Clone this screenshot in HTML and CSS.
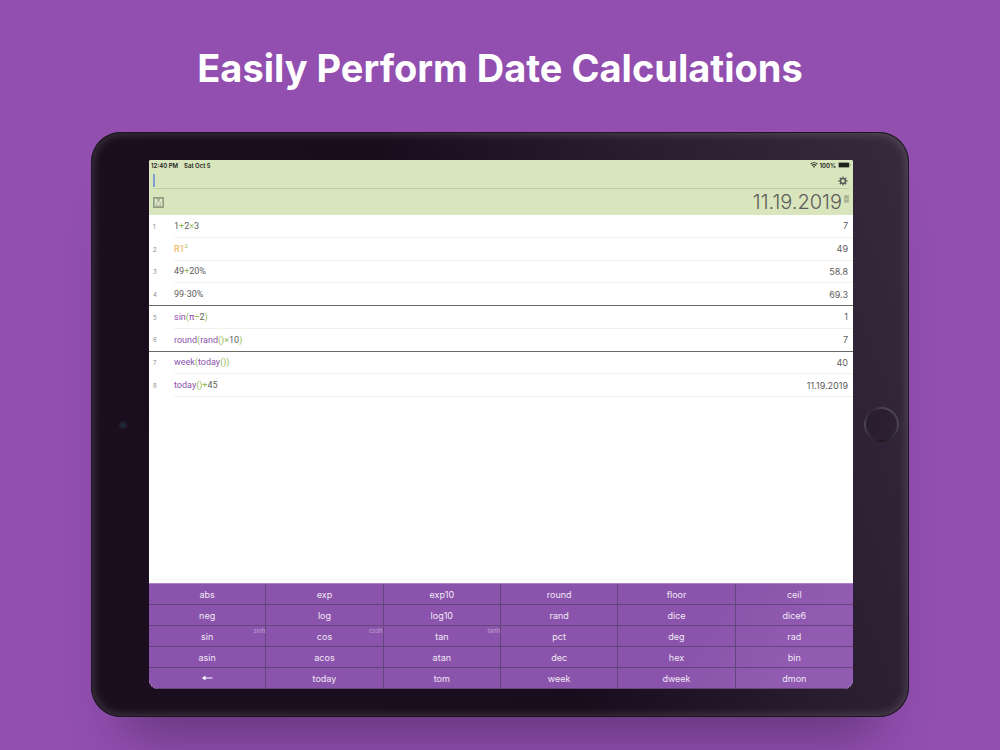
FILE: index.html
```html
<!DOCTYPE html>
<html lang="en">
<head>
<meta charset="utf-8">
<meta name="viewport" content="width=device-width, initial-scale=1">
<title>Easily Perform Date Calculations</title>
<link rel="stylesheet" href="styles.css">
</head>
<body>
<h1 class="headline">Easily Perform Date Calculations</h1>
<main class="tablet">
  <div class="side side-left"><span class="camera"></span></div>
  <section class="screen">
    <header class="display">
      <div class="status">
        <span>12:40 PM</span><span>Sat Oct 5</span>
        <svg class="wifi" viewBox="0 0 14 10" aria-hidden="true"><path d="M1 3.6a8.6 8.6 0 0 1 12 0M3.3 6a5.3 5.3 0 0 1 7.4 0" fill="none" stroke="currentColor" stroke-width="1.9"/><path d="M7 9.8 4.9 7.6a3 3 0 0 1 4.2 0z" fill="currentColor"/></svg>
        <span>100%</span>
        <svg class="battery" viewBox="0 0 26 12" aria-hidden="true"><rect x=".5" y=".5" width="22.500" height="11" rx="3" fill="none" stroke="currentColor" opacity=".45"/><rect x="1.500" y="1.500" width="20.500" height="9" rx="1.500" fill="currentColor"/><path d="M24.300 4v4q1.200-.6 1.200-2t-1.200-2" fill="currentColor" opacity=".5"/></svg>
      </div>
      <div class="entry">
        <input class="entry-field" type="text" aria-label="Expression">
        <button class="settings" type="button" aria-label="Settings">
          <svg viewBox="0 0 20 20" aria-hidden="true"><g stroke="currentColor" stroke-width="2.600"><path d="M10 1v4M10 15v4M1 10h4M15 10h4M3.600 3.600l3 3M13.400 13.400l3 3M16.400 3.600l-3 3M6.600 13.400l-3 3"/></g><circle cx="10" cy="10" r="4.900" fill="none" stroke="currentColor" stroke-width="2.900"/></svg>
        </button>
      </div>
      <div class="result">
        <span class="memory">M</span>
        <output class="total">11.19.2019</output>
        <span class="modes"><span>DEG</span><span>DEC</span></span>
      </div>
    </header>
    <ol class="tape">
      <li class="line"><span class="num">1</span><span class="calc"><span class="expr">1<i class="op">+</i>2<i class="op">×</i>3</span><span>7</span></span></li>
      <li class="line"><span class="num">2</span><span class="calc"><span class="expr"><i class="ref">R1</i><sup class="op">2</sup></span><span>49</span></span></li>
      <li class="line"><span class="num">3</span><span class="calc"><span class="expr">49<i class="op">+</i>20%</span><span>58.8</span></span></li>
      <li class="line divided"><span class="num">4</span><span class="calc"><span class="expr">99<i class="op">-</i>30%</span><span>69.3</span></span></li>
      <li class="line"><span class="num">5</span><span class="calc"><span class="expr"><i class="fn">sin</i><i class="op">(</i><i class="fn">π</i><i class="op">÷</i>2<i class="op">)</i></span><span>1</span></span></li>
      <li class="line divided"><span class="num">6</span><span class="calc"><span class="expr"><i class="fn">round</i><i class="op">(</i><i class="fn">rand</i><i class="op">()×</i>10<i class="op">)</i></span><span>7</span></span></li>
      <li class="line"><span class="num">7</span><span class="calc"><span class="expr"><i class="fn">week</i><i class="op">(</i><i class="fn">today</i><i class="op">())</i></span><span>40</span></span></li>
      <li class="line"><span class="num">8</span><span class="calc"><span class="expr"><i class="fn">today</i><i class="op">()+</i>45</span><span>11.19.2019</span></span></li>
    </ol>
    <div class="keypad">
      <button type="button" class="key">abs</button><button type="button" class="key">exp</button><button type="button" class="key">exp10</button><button type="button" class="key">round</button><button type="button" class="key">floor</button><button type="button" class="key">ceil</button>
      <button type="button" class="key">neg</button><button type="button" class="key">log</button><button type="button" class="key">log10</button><button type="button" class="key">rand</button><button type="button" class="key">dice</button><button type="button" class="key">dice6</button>
      <button type="button" class="key">sin<span class="alt">sinh</span></button><button type="button" class="key">cos<span class="alt">cosh</span></button><button type="button" class="key">tan<span class="alt">tanh</span></button><button type="button" class="key">pct</button><button type="button" class="key">deg</button><button type="button" class="key">rad</button>
      <button type="button" class="key">asin</button><button type="button" class="key">acos</button><button type="button" class="key">atan</button><button type="button" class="key">dec</button><button type="button" class="key">hex</button><button type="button" class="key">bin</button>
      <button type="button" class="key" aria-label="Back"><svg class="back" viewBox="0 0 22 12" aria-hidden="true"><path d="M5 6h16" stroke="currentColor" stroke-width="2.400"/><path d="M0 6 7 1v10z" fill="currentColor"/></svg></button><button type="button" class="key">today</button><button type="button" class="key">tom</button><button type="button" class="key">week</button><button type="button" class="key">dweek</button><button type="button" class="key">dmon</button>
    </div>
  </section>
  <div class="side"><button class="home" type="button" aria-label="Home"></button></div>
</main>
</body>
</html>
```
FILE: styles.css
```css
* { box-sizing: border-box; }
body {
  margin: 0;
  min-height: 100vh;
  display: flex;
  flex-direction: column;
  padding: 44px 91px 33px;
  background: #924fb0;
  font-family: Inter, "Liberation Sans", sans-serif;
  overflow: hidden;
}
button {
  margin: 0;
  padding: 0;
  border: 0;
  background: none;
  font: inherit;
  color: inherit;
}
.headline {
  margin: 0 0 40px;
  font-size: 38px;
  line-height: 48px;
  font-weight: 700;
  text-align: center;
  color: #fff;
}
.tablet {
  flex: 1;
  display: grid;
  grid-template-columns: 58px 1fr 56px;
  padding: 28px 0;
  border-radius: 30px;
  background: linear-gradient(70deg, #1b0f1f 0%, #190c1d 48%, #2b1e31 75%, #372a3d 100%);
  box-shadow:
    inset 0 0 0 1px #1b171d,
    inset 0 0 12px rgba(255, 255, 255, .24),
    0 50px 50px -34px rgba(40, 20, 50, .45);
}
.side {
  display: flex;
  align-items: center;
  justify-content: center;
}
.side-left { padding-left: 6px; }
.camera {
  width: 8px;
  height: 8px;
  border-radius: 50%;
  background: radial-gradient(#1d2940 25%, #231b2c 45%, #251a2a 100%);
}
.home {
  width: 35px;
  height: 35px;
  border-radius: 50%;
  background:
    linear-gradient(100deg, #291c2e, #2f2135) padding-box,
    conic-gradient(#4a434f, #4c4651 25%, #1d171f 50%, #4c4651 75%, #2c2530 90%, #4a434f) border-box;
  border: 2px solid transparent;
}
.screen {
  display: flex;
  flex-direction: column;
  min-width: 0;
  overflow: hidden;
  border-radius: 2px 2px 9px 9px;
  background: #fff;
  color: #5c5c5c;
  font-size: 9px;
}
.display {
  padding: 0 4px;
  background: #d9e5bc;
}
.status {
  display: flex;
  align-items: center;
  height: 10px;
  gap: 6px;
  margin: 0 -2px;
  font-size: 6px;
  font-weight: 600;
  color: #20231c;
}
.wifi {
  width: 8px;
  height: 6px;
  margin: 0 -4px 0 auto;
}
.battery {
  width: 13px;
  height: 6px;
  margin-left: -4px;
}
.entry {
  display: flex;
  align-items: center;
  height: 19px;
  padding-top: 3px;
  border-bottom: 1px solid #c3cda9;
}
.entry-field {
  flex: 1;
  min-width: 0;
  height: 13px;
  padding: 0;
  border: 0;
  border-left: 2px solid #7f9fd2;
  outline: 0;
  background: none;
  font: inherit;
  color: inherit;
  caret-color: #6d8fd0;
}
.settings {
  width: 12px;
  height: 10px;
  display: flex;
  justify-content: center;
}
.settings svg {
  width: 10px;
  height: 10px;
}
.result {
  display: flex;
  align-items: center;
  height: 26px;
}
.memory {
  width: 11px;
  height: 11px;
  margin-top: 1px;
  border: 1px solid #929c81;
  background: #a1ab8e;
  color: #e6eed3;
  font-weight: 600;
  line-height: 9px;
  text-align: center;
}
.total {
  margin-left: auto;
  font-size: 20px;
  line-height: 24px;
  font-weight: 300;
}
.modes {
  display: flex;
  flex-direction: column;
  width: 5px;
  height: 8px;
  margin: 0 0 7px 2px;
  overflow: hidden;
  background: #bac4a2;
  color: #8b947b;
  font-size: 2px;
  line-height: 4px;
  text-align: center;
}
.tape {
  display: grid;
  grid-template-rows: repeat(8, 1fr);
  height: 182px;
  margin: 0;
  padding: 0;
  list-style: none;
}
.line {
  display: grid;
  grid-template-columns: 25px 1fr;
  align-items: stretch;
}
.num {
  display: flex;
  align-items: center;
  padding-left: 4px;
  font-size: 6px;
  color: #8a8a8a;
}
.calc {
  display: flex;
  align-items: center;
  justify-content: space-between;
  padding-right: 5px;
  border-bottom: 1px solid #f2f2e9;
}
.expr { font-family: Roboto, Inter, sans-serif; }
.divided { border-bottom: 1px solid #6b6b65; }
.divided .calc { border-bottom: 0; }
.tape i { font-style: normal; }
.tape sup {
  font-size: 6px;
  line-height: 6px;
}
.op { color: #93b84f; }
.ref { color: #efae42; }
.fn { color: #8b52ad; }
.keypad {
  display: grid;
  grid-template-columns: repeat(6, 1fr);
  grid-auto-rows: 21px;
  margin-top: auto;
  background: linear-gradient(125deg, #8b54ac 75%, #905bb0 90%);
  border-top: 1px solid #ae80c6;
  color: #f1e8f5;
}
.key {
  position: relative;
  display: flex;
  align-items: center;
  justify-content: center;
  border-right: 1px solid #65467a;
  border-bottom: 1px solid #65467a;
}
.key:nth-child(6n) { border-right: 0; }
.alt {
  position: absolute;
  top: 1px;
  right: 0;
  font-size: 6px;
  line-height: 8px;
  color: #c4a2d3;
}
.back {
  width: 11px;
  height: 6px;
  color: #fff;
}
```
